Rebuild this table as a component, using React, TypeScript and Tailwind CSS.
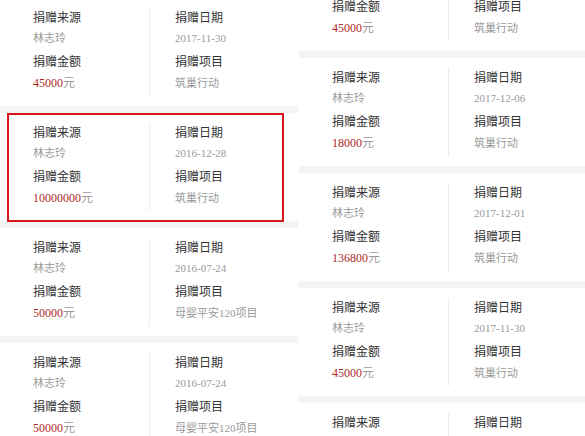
type Donation = {
  source: string;
  date: string;
  amount: string;
  project: string;
};

const leftList: Donation[] = [
  { source: "林志玲", date: "2017-11-30", amount: "45000", project: "筑巢行动" },
  { source: "林志玲", date: "2016-12-28", amount: "10000000", project: "筑巢行动" },
  { source: "林志玲", date: "2016-07-24", amount: "50000", project: "母婴平安120项目" },
  { source: "林志玲", date: "2016-07-24", amount: "50000", project: "母婴平安120项目" },
];

const rightList: Donation[] = [
  { source: "林志玲", date: "2017-12-06", amount: "45000", project: "筑巢行动" },
  { source: "林志玲", date: "2017-12-06", amount: "18000", project: "筑巢行动" },
  { source: "林志玲", date: "2017-12-01", amount: "136800", project: "筑巢行动" },
  { source: "林志玲", date: "2017-11-30", amount: "45000", project: "筑巢行动" },
  { source: "林志玲", date: "2017-11-30", amount: "45000", project: "筑巢行动" },
];

function DonationCard({ item, marked }: { item: Donation; marked?: boolean }) {
  return (
    <div className="relative flex h-[108px] bg-white">
      <div className="w-[149px] pl-[33px] pt-[10px]">
        <div className="h-5 leading-5 text-[12px] text-[#333]">捐赠来源</div>
        <div className="h-5 leading-5 text-[11px] text-[#9a9a9a]">{item.source}</div>
        <div className="mt-[4px] h-5 leading-5 text-[12px] text-[#333]">捐赠金额</div>
        <div className="mt-px h-5 leading-5 text-[12px] text-[#9a9a9a]">
          <span className="text-[#b02a2a]">{item.amount}</span>元
        </div>
      </div>
      <div className="my-[10px] w-px bg-[#ececec]" />
      <div className="flex-1 pl-[25px] pt-[10px]">
        <div className="h-5 leading-5 text-[12px] text-[#333]">捐赠日期</div>
        <div className="h-5 leading-5 text-[11px] text-[#9a9a9a]">{item.date}</div>
        <div className="mt-[4px] h-5 leading-5 text-[12px] text-[#333]">捐赠项目</div>
        <div className="mt-px h-5 leading-5 text-[11px] text-[#9a9a9a]">{item.project}</div>
      </div>
      {marked && (
        <div className="pointer-events-none absolute left-[7px] top-0 h-[109px] w-[277px] border-[2px] border-[#d9161c]" />
      )}
    </div>
  );
}

function Panel({ list, offset, markIndex }: { list: Donation[]; offset: string; markIndex?: number }) {
  return (
    <div className="h-[436px] overflow-hidden">
      <div className={offset}>
        {list.map((item, i) => (
          <div key={i}>
            {i > 0 && <div className="h-[7px] bg-[#f4f4f4]" />}
            <DonationCard item={item} marked={i === markIndex} />
          </div>
        ))}
      </div>
    </div>
  );
}

export default function App() {
  return (
    <div
      className="flex h-[436px] w-[585px] overflow-hidden bg-white"
      style={{ fontFamily: '"Liberation Serif", "Noto Sans CJK SC", serif' }}
    >
      <div className="w-[298px]">
        <Panel list={leftList} offset="-mt-[2px]" markIndex={1} />
      </div>
      <div className="ml-[1px] flex-1">
        <Panel list={rightList} offset="-mt-[57px]" />
      </div>
    </div>
  );
}
